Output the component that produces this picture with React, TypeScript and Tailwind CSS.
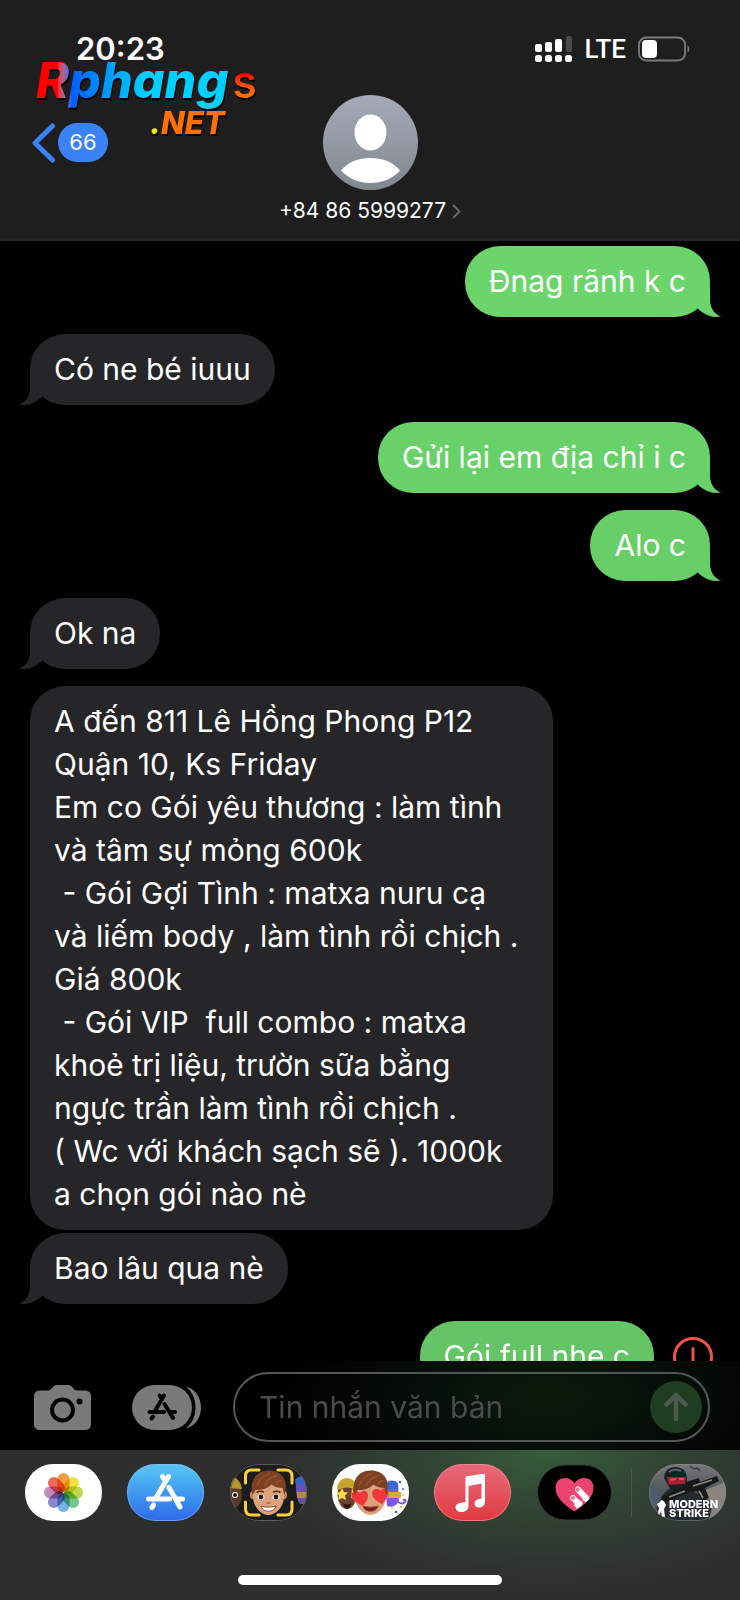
import React from 'react'

type Message = {
  text: string
  sent?: boolean
  tail?: boolean
  gap?: boolean
  color: string
}

const messages: Message[] = [
  { text: 'Đnag rãnh k c', sent: true, tail: true, color: 'bg-[#6bd46a] text-[#6bd46a]' },
  { text: 'Có ne bé iuuu', tail: true, gap: true, color: 'bg-[#262628] text-[#262628]' },
  { text: 'Gửi lại em địa chỉ i c', sent: true, tail: true, gap: true, color: 'bg-[#69d169] text-[#69d169]' },
  { text: 'Alo c', sent: true, tail: true, gap: true, color: 'bg-[#68ce67] text-[#68ce67]' },
  { text: 'Ok na', tail: true, gap: true, color: 'bg-[#262628] text-[#262628]' },
  {
    text: `A đến 811 Lê Hồng Phong P12
Quận 10, Ks Friday
Em co Gói yêu thương : làm tình
và tâm sự mỏng 600k
 - Gói Gợi Tình : matxa nuru cạ
và liếm body , làm tình rồi chịch .
Giá 800k
 - Gói VIP  full combo : matxa
khoẻ trị liệu, trườn sữa bằng
ngực trần làm tình rồi chịch .
( Wc với khách sạch sẽ ). 1000k
a chọn gói nào nè`,
    gap: true,
    color: 'w-[523px] bg-[#262628] text-[#262628]',
  },
  { text: 'Bao lâu qua nè', tail: true, color: 'bg-[#262628] text-[#262628]' },
]

function Tail({ sent }: { sent?: boolean }) {
  return (
    <svg
      className={`absolute bottom-0 h-9 w-6 ${sent ? '-right-[11px] -scale-x-100' : '-left-[11px]'}`}
      viewBox="0 0 24 36"
      fill="currentColor"
    >
      <path d="M11 0V18C11 27 7 33 0 35.5C10 37.500 17 33 23 28L24 20Z" />
    </svg>
  )
}

function Bubble({ text, sent, tail, gap, color }: Message) {
  return (
    <div className={`flex px-[30px] ${sent ? 'justify-end' : 'justify-start'} ${gap ? 'mt-[17px]' : 'mt-[3px]'}`}>
      <div className={`relative max-w-[523px] rounded-[35px] px-6 py-[14px] ${color}`}>
        <p className="whitespace-pre-wrap text-[30px] leading-[43px] text-white">{text}</p>
        {tail && <Tail sent={sent} />}
      </div>
    </div>
  )
}

function StatusBar() {
  return (
    <div className="flex h-8 items-center justify-between pl-[76px] pr-[50px]">
      <span className="text-[31px] font-semibold leading-8">20:23</span>
      <div className="flex items-center gap-3">
        <svg width="38" height="28" viewBox="0 0 38 28" fill="white">
          <rect x="0" y="9" width="7" height="8" rx="2" />
          <rect x="10" y="7" width="7" height="10" rx="2" />
          <rect x="20" y="4" width="7" height="13" rx="2" />
          <rect x="31" y="1" width="6" height="16" rx="2" fill="#4b4b4b" />
          <rect x="0" y="20" width="7" height="7" rx="2.500" />
          <rect x="10" y="20" width="7" height="7" rx="2.500" />
          <rect x="20" y="20" width="7" height="7" rx="2.500" />
          <rect x="30" y="20" width="7" height="7" rx="2.500" />
        </svg>
        <span className="font-['Roboto','Liberation_Sans',sans-serif] text-[26px] font-medium leading-8">LTE</span>
        <svg width="52" height="26" viewBox="0 0 52 26" fill="none">
          <rect x="1" y="1.500" width="46" height="23" rx="7" stroke="#7c7c7c" strokeWidth="1.800" />
          <rect x="4" y="4" width="15" height="18" rx="4" fill="white" />
          <path d="M49.500 9.500c2.400 1 2.400 6 0 7z" fill="#7c7c7c" />
        </svg>
      </div>
    </div>
  )
}

function Watermark() {
  return (
    <div className="absolute left-9 top-[50px] flex flex-col italic">
      <div className="flex items-baseline leading-[60px] drop-shadow-[1px_2px_0_#000]">
        <span className="bg-linear-to-r from-[#ff0000] from-11% via-[#0a5cff] via-18% to-[#00d0ff] to-55% bg-clip-text pr-1 text-[50px] font-extrabold text-transparent">
          Rphang
        </span>
        <span className="bg-linear-to-b from-[#ff0000] from-40% to-[#ff7a00] to-80% bg-clip-text text-[46px] font-medium not-italic text-transparent">
          s
        </span>
      </div>
      <span className="-mt-2 ml-[114px] text-[31px] font-extrabold leading-10 text-[#ff7000] drop-shadow-[1px_2px_0_#000]">
        <span className="text-[#ffee00]">.</span>NET
      </span>
    </div>
  )
}

function Header() {
  return (
    <header className="relative shrink-0 border-b-2 border-[#232323] bg-[#1e1e1e] pb-[13px] pt-[33px] text-white">
      <StatusBar />
      <div className="mt-[30px] grid grid-cols-[1fr_auto_1fr] items-center">
        <button type="button" aria-label="Back, 66 unread" className="flex items-center gap-[2px] pl-8 text-white">
          <svg width="24" height="40" viewBox="0 0 24 40" fill="none">
            <path d="M20.500 3L3 20l17.500 17" stroke="#3b82f6" strokeWidth="5" strokeLinecap="round" strokeLinejoin="round" />
          </svg>
          <span className="flex h-[39px] w-[50px] items-center justify-center rounded-full bg-[#3b82f6] text-[22px]">66</span>
        </button>
        <svg width="95" height="95" viewBox="0 0 95 95">
          <defs>
            <linearGradient id="avatar" x1="0" y1="0" x2="0" y2="1">
              <stop offset="0" stopColor="#a6aab8" />
              <stop offset="1" stopColor="#81868f" />
            </linearGradient>
          </defs>
          <circle cx="47.500" cy="47.500" r="47.500" fill="url(#avatar)" />
          <ellipse cx="47.500" cy="37.500" rx="16" ry="18" fill="white" />
          <path d="M18 75.500C25 67 35 63 47.500 63s22.500 4 29.500 12.500C69 84 59 88 47.500 88S26 84 18 75.500z" fill="white" />
        </svg>
      </div>
      <button type="button" className="mx-auto mt-[6px] flex items-center gap-[6px] text-[21px] leading-[30px]">
        +84 86 5999277
        <svg width="9" height="15" viewBox="0 0 9 15" fill="none">
          <path d="M1 1l6.500 6.500L1 14" stroke="#6b6b6b" strokeWidth="1.800" />
        </svg>
      </button>
      <Watermark />
    </header>
  )
}

function CameraIcon() {
  return (
    <svg width="57" height="45" viewBox="0 0 57 45">
      <path
        d="M6 5.500H14C16 5.500 17 4.500 18 3C19.500 1 20.500 0 23 0H34C36.500 0 37.500 1 39 3C40 4.500 41 5.500 43 5.500H51Q57 5.500 57 11.500V39Q57 45 51 45H6Q0 45 0 39V11.500Q0 5.500 6 5.500Z"
        fill="#7a7a7a"
      />
      <circle cx="28.500" cy="25" r="10.500" fill="none" stroke="black" strokeWidth="4" />
      <circle cx="45.500" cy="16.500" r="3" fill="black" />
    </svg>
  )
}

function AppsIcon() {
  return (
    <svg width="69" height="45" viewBox="0 0 69 45">
      <rect width="60" height="45" rx="22.500" fill="#7a7a7a" />
      <path d="M54 1.500C63 4 69 12 69 22.500S63 41 54 43.500C60.500 38 63.500 31 63.500 22.500S60.500 7 54 1.500Z" fill="#7a7a7a" />
      <g stroke="black" strokeWidth="4" strokeLinecap="round" fill="none">
        <path d="M32 10.500L23 26M27.500 10.500L30 14.500M32.500 19L41 33M17.500 27H32M38.500 27H43M21 31.500L19.500 33.500" />
      </g>
    </svg>
  )
}

function Composer() {
  return (
    <div className="flex items-center bg-black bg-radial-[ellipse_270px_120px_at_74%_40%] from-[#0c1b0e] to-black pb-2 pl-[34px] pr-[30px] pt-[11px]">
      <button type="button" aria-label="Camera">
        <CameraIcon />
      </button>
      <button type="button" aria-label="Apps" className="ml-[41px]">
        <AppsIcon />
      </button>
      <div className="ml-8 flex h-[70px] min-w-0 flex-1 items-center rounded-full border-2 border-[#555656] pl-6 pr-[6px]">
        <input
          type="text"
          aria-label="Tin nhắn văn bản"
          placeholder="Tin nhắn văn bản"
          className="min-w-0 flex-1 bg-transparent text-[30px] text-white outline-none placeholder:text-[#4a4c4b]"
        />
        <button type="button" aria-label="Send" className="flex size-[52px] items-center justify-center rounded-full bg-[#1f3d20]">
          <svg width="24" height="30" viewBox="0 0 24 30" fill="none">
            <path d="M12 27V4M2.500 12.500L12 3l9.500 9.500" stroke="#505850" strokeWidth="4.500" strokeLinecap="round" strokeLinejoin="round" />
          </svg>
        </button>
      </div>
    </div>
  )
}

const petals = [
  { angle: 0, color: '#f5a040' },
  { angle: 45, color: '#f0e23c' },
  { angle: 90, color: '#bcd84c' },
  { angle: 135, color: '#74c68c' },
  { angle: 180, color: '#74b0e4' },
  { angle: 225, color: '#8a86c8' },
  { angle: 270, color: '#c48abc' },
  { angle: 315, color: '#ee6a5c' },
]

function PhotosIcon() {
  return (
    <svg className="h-[57px] w-full rounded-[28px] bg-white" viewBox="0 0 77 57">
      <g className="isolate">
        {petals.map((p) => (
          <rect
            key={p.angle}
            x="32.500"
            y="9"
            width="12"
            height="19"
            rx="6"
            fill={p.color}
            transform={`rotate(${p.angle} 38.500 28.500)`}
            className="mix-blend-multiply"
          />
        ))}
      </g>
    </svg>
  )
}

function AppStoreIcon() {
  return (
    <svg className="h-[57px] w-full rounded-[28px] bg-linear-to-b from-[#5ac8f5] to-[#3068e8]" viewBox="0 0 77 57">
      <rect x="0.500" y="0.500" width="76" height="56" rx="28" fill="none" stroke="#8ab8f4" strokeOpacity="0.700" />
      <g stroke="white" strokeWidth="5" strokeLinecap="round">
        <path d="M41.500 12.500L29.500 33M35.500 12.500L38 16.500M42 23.500L53 43M21.500 35H42.500M50 35H55.500M26.500 41L25 43.500" />
      </g>
    </svg>
  )
}

function Face({ hearts }: { hearts?: boolean }) {
  return (
    <g>
      <ellipse cx="22.500" cy="31" rx="2.500" ry="4" fill="#c98460" />
      <ellipse cx="54.500" cy="31" rx="2.500" ry="4" fill="#c98460" />
      <path d="M23 20C23 12 54 12 54 20V33C54 42 46 51 38.500 51S23 42 23 33Z" fill="#dba27c" />
      <path d="M31 42C35 43.500 42 43.500 46 42C45 49 32 49 31 42Z" fill={hearts ? '#7a201c' : '#fff'} stroke="#9b4438" />
      {hearts ? (
        <g fill="#f3363c">
          <path d="M31 42C24 39 19 35 19.500 31C20 26.500 26 26 28 29.500C30 25 36 26 36 31.500C36 36 33 39 31 42Z" />
          <path d="M50 40C44 37 40 33 40 29C40.500 24.500 46.500 23 48.500 27C50.500 22.500 56 24 56 28.500C56 33 53 37 50 40Z" />
        </g>
      ) : (
        <g>
          <ellipse cx="31" cy="33" rx="3.500" ry="2.800" fill="white" />
          <ellipse cx="46" cy="33" rx="3.500" ry="2.800" fill="white" />
          <circle cx="31" cy="33" r="2.400" fill="#2b1710" />
          <circle cx="46" cy="33" r="2.400" fill="#2b1710" />
          <path d="M26.500 28.500Q30 26.500 34 28M43 28Q47 26.500 50.500 28.500" stroke="#5c2e17" strokeWidth="1.500" fill="none" />
          <path d="M36.500 38.500Q38.500 39.800 40.500 38.500" stroke="#b06c4a" strokeWidth="1.500" fill="none" />
        </g>
      )}
      <path d="M22.500 31C19 17 26 7 38 6.500C51 6 59 15 54.500 31C53.500 29 53 26.500 52.500 24C48 24 44 22.500 41.500 20.500C37 25 31 26.500 25.500 26C24.500 28 23.500 29.500 22.500 31Z" fill="#7c4123" />
      <path d="M27 22Q30 13 40 9.500M34 22.500Q37 14 47 11.500M46 20.500Q48 16 51.500 16.500" stroke="#96562f" strokeWidth="1.300" fill="none" />
    </g>
  )
}

function MemojiCameraIcon() {
  return (
    <svg className="h-[57px] w-full rounded-[28px] bg-[#1c1c1c]" viewBox="0 0 77 57">
      <ellipse cx="3" cy="31" rx="9" ry="13" fill="#5b3a29" />
      <path d="M-6 24C-5 10 9 9 12 25Z" fill="#b5982c" />
      <circle cx="5" cy="31" r="3" fill="white" />
      <circle cx="5" cy="31" r="2" fill="#20120c" />
      <path d="M66 17Q72 10 80 14V40H70Q65 34 66 17Z" fill="#6a4fb8" />
      <path d="M65 16Q70 10 80 12V21H66Z" fill="#3a62cc" />
      <rect x="67" y="28" width="10" height="6" fill="#b58a34" />
      <Face />
      <path
        d="M15.500 19V12Q15.500 6 21.500 6H29M48 6H56Q62 6 62 12V19M62 38V45Q62 51 56 51H48M29 51H21.500Q15.500 51 15.500 45V38"
        fill="none"
        stroke="#fbcf3b"
        strokeWidth="3"
        strokeLinecap="round"
      />
      <rect x="0.500" y="0.500" width="76" height="56" rx="28" fill="none" stroke="#5a5a5a" />
    </svg>
  )
}

function MemojiStickersIcon() {
  return (
    <svg className="h-[57px] w-full rounded-[28px] bg-white" viewBox="0 0 77 57">
      <ellipse cx="15" cy="31" rx="9.500" ry="14" fill="#6b4530" />
      <path d="M5 26C5 10 25 10 25 26Q15 21 5 26Z" fill="#c5a32e" />
      <path d="M10 24l2 4 4 .5-3 3 1 4.500-4-2-4 2 1-4.500-3-3 4-.5z" fill="#ffd94a" />
      <path d="M20 24l1.500 4 3.500.5-3 3v4l-3-2z" fill="#ffd94a" />
      <path d="M11 39Q15 42 19 39Q18 45 15 45T11 39Z" fill="#351512" />
      <path d="M53 20Q60 16 66 19L67 37Q62 45 55 42Z" fill="#7a5ad0" />
      <path d="M54 21Q56 14 65 18L66 25H54Z" fill="#3b66d8" />
      <rect x="56" y="28" width="13" height="6" rx="1" fill="#e0a53c" />
      <path d="M66 38Q71 41 73 38T71 36" fill="none" stroke="#7a5ad0" strokeWidth="2" />
      <g fill="#2f62e8">
        <circle cx="68" cy="18" r="1.300" />
        <circle cx="71" cy="25" r="1" />
        <circle cx="64" cy="48" r="1.300" />
      </g>
      <g fill="#f6bd2c">
        <circle cx="71" cy="31" r="1" />
        <circle cx="69" cy="43" r="1.300" />
        <circle cx="60" cy="44" r="1" />
      </g>
      <Face hearts />
    </svg>
  )
}

function MusicIcon() {
  return (
    <svg className="h-[57px] w-full rounded-[28px] bg-linear-to-b from-[#e8697a] to-[#e0383f]" viewBox="0 0 77 57">
      <rect x="0.500" y="0.500" width="76" height="56" rx="28" fill="none" stroke="#f0929a" strokeOpacity="0.700" />
      <path
        d="M31.500 13.500Q31.500 12.500 32.500 12.200L50 9.700Q51 9.500 51 10.500V38C51 41.500 48 43.500 45 43.500C42 43.500 40.500 41.500 40.500 39.500C40.500 37 42.500 35.500 45 35L47.500 34.500V19.500L34.500 22V42C34.500 45.500 31.500 48 27.500 48C24 48 21.500 46 21.500 43.500C21.500 41 24 39 27 38.700L31.500 38Z"
        fill="white"
      />
    </svg>
  )
}

function DigitalTouchIcon() {
  return (
    <svg className="h-[57px] w-full" viewBox="0 0 77 57">
      <rect x="1.500" y="1" width="74" height="55" rx="27.500" fill="black" stroke="#3c3c3e" />
      <path d="M38.500 47.500C30 42 19.500 34 19.500 24C19.500 17 24 14 29 14C33 14 36.500 16 38.500 19C40.500 16 44 14 48 14C53 14 57.500 17 57.500 24C57.500 34 47 42 38.500 47.500Z" fill="#eb4470" />
      <g stroke="white" strokeWidth="6" strokeLinecap="round">
        <path d="M42 25.500L50 34M37 34L43 40" />
      </g>
      <path d="M50 38L53.500 34.500L52 31L46 36ZM41 45L47 39L44 36L38 41Z" fill="white" />
      <circle cx="41.500" cy="25.500" r="2.200" fill="#f07f9a" />
      <circle cx="37" cy="34" r="2.200" fill="#f07f9a" />
    </svg>
  )
}

function GameIcon() {
  return (
    <svg className="h-[57px] w-full rounded-[28px] bg-linear-to-b from-[#75787a] to-[#30363c]" viewBox="0 0 77 57">
      <path d="M0 22L5 19L15 36L6 44H0Z" fill="#4c5c6c" />
      <path d="M56 26L77 18V57H50Z" fill="#8b847e" />
      <path d="M8 45Q12 28 22 24H38L52 32L64 38L60 57H14Z" fill="#252c31" />
      <path d="M15 14Q16 3 27 3Q38 4 38 16L36 25Q30 28 22 26Z" fill="#1b2024" />
      <path d="M20 8Q25 4 32 7" fill="none" stroke="#56616a" strokeWidth="2" />
      <path d="M18 13L37 13L36 20L20 21Z" fill="#a51f35" />
      <path d="M21 16L27 15M30 15L35 15" stroke="#e64a55" strokeWidth="2" />
      <path d="M12 33L37 21V18L50 14L51 18L68 12L70 17L56 24L60 34L53 37L48 27L38 29L16 39Z" fill="#16191b" />
      <path d="M44 22L63 16M20 33L36 27M50 27L54 34" stroke="#8d8a7b" strokeWidth="1.800" />
      <path d="M41 2l4 3 3-1 3 3" stroke="#36393b" strokeWidth="1.500" fill="none" />
      <path d="M12 36l3 1 2 4-2 4 1 8h-3l-1-6-2 6H8l2-9-2-4 3-2z" fill="white" />
      <text x="20" y="44" fontSize="11" fontWeight="800" fill="white">MODERN</text>
      <text x="20" y="53" fontSize="11" fontWeight="800" fill="white">STRIKE</text>
      <rect x="0.500" y="0.500" width="76" height="56" rx="28" fill="none" stroke="#888" strokeOpacity="0.600" />
    </svg>
  )
}

const apps = [
  { name: 'Photos', icon: <PhotosIcon /> },
  { name: 'App Store', icon: <AppStoreIcon /> },
  { name: 'Memoji', icon: <MemojiCameraIcon /> },
  { name: 'Stickers', icon: <MemojiStickersIcon /> },
  { name: 'Music', icon: <MusicIcon /> },
  { name: 'Digital Touch', icon: <DigitalTouchIcon /> },
]

function AppDrawer() {
  return (
    <div className="bg-[#2e2e2e] bg-radial-[ellipse_280px_140px_at_74%_0%] from-[#375d3a] via-[#314334] via-45% to-[#2e2e2e] pb-[15px] pt-[14px]">
      <div className="flex items-center justify-between pl-[25px] pr-[14px]">
        {apps.map((app) => (
          <button type="button" key={app.name} aria-label={app.name} className="w-[77px]">
            {app.icon}
          </button>
        ))}
        <div className="-mx-2 h-12 w-px bg-[#4b574d]" />
        <button type="button" aria-label="Modern Strike" className="w-[77px]">
          <GameIcon />
        </button>
      </div>
      <div className="mx-auto mt-[54px] h-[10px] w-[264px] rounded-full bg-white" />
    </div>
  )
}

export default function App() {
  return (
    <div className="flex h-screen flex-col bg-black font-['Inter','Liberation_Sans',sans-serif]">
      <Header />
      <main className="min-h-0 flex-1 overflow-hidden pt-[2px]">
        {messages.map((message) => (
          <Bubble key={message.text} {...message} />
        ))}
        <div className="mt-[17px] flex items-center justify-end gap-[19px] pr-[27px]">
          <p className="rounded-[35px] bg-[#64c466] px-6 py-[14px] text-[30px] leading-[43px] text-white">Gói full nhe c</p>
          <button type="button" aria-label="Not delivered">
            <svg width="40" height="40" viewBox="0 0 40 40" fill="none" stroke="#f0533f" strokeWidth="3" strokeLinecap="round">
              <circle cx="20" cy="20" r="18.500" />
              <path d="M20 11.500V23" />
              <circle cx="20" cy="29" r="0.500" />
            </svg>
          </button>
        </div>
      </main>
      <footer className="shrink-0">
        <Composer />
        <AppDrawer />
      </footer>
    </div>
  )
}
